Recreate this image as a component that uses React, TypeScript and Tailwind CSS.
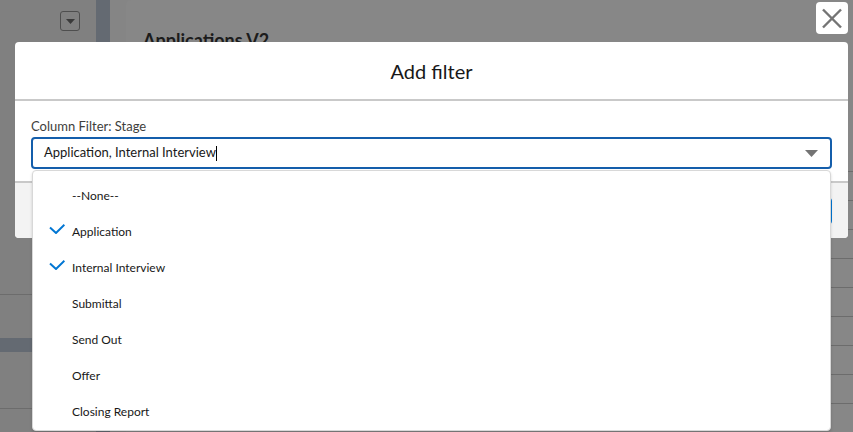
import React from "react";

const items = [
  { label: "--None--", checked: false },
  { label: "Application", checked: true },
  { label: "Internal Interview", checked: true },
  { label: "Submittal", checked: false },
  { label: "Send Out", checked: false },
  { label: "Offer", checked: false },
  { label: "Closing Report", checked: false },
];

function Check() {
  return (
    <svg width="16" height="10" viewBox="0 0 16 10" className="block">
      <polyline points="1,3.6 7,9 15.4,0.8" fill="none" stroke="#0176d3" strokeWidth="2" />
    </svg>
  );
}

export default function App() {
  return (
    <div className="relative w-[853px] h-[432px] overflow-hidden bg-[#858585] font-[Lato,sans-serif]">
      {/* Background page (dimmed) */}
      <div className="flex h-full">
        <aside className="w-[96px] bg-[#808080] flex flex-col">
          <div className="h-[294px] flex justify-end pr-[16px] pt-[11px]">
            <div className="w-[20px] h-[20px] rounded-[3px] border border-[#4e4e4e] flex items-center justify-center">
              <svg width="9" height="5" viewBox="0 0 9 5">
                <polygon points="0,0 9,0 4.5,5" fill="#3a3a3a" />
              </svg>
            </div>
          </div>
          <div className="h-[44px] border-t border-[#6c6c6c]" />
          <div className="h-[14px] bg-[#646a72]" />
          <div className="h-[56px]" />
          <div className="flex-1 border-t border-[#6c6c6c]" />
        </aside>
        <div className="w-[14px] bg-[#646a72]" />
        <div className="w-[16px]" />
        <main className="flex-1 bg-[#878787] rounded-tl-[5px] flex flex-col">
          <div className="h-[196px] pl-[17px] pt-[28px]">
            <h1 className="text-[18px] leading-[24px] font-bold text-[#1c1c1c]">Applications V2</h1>
          </div>
          {Array.from({ length: 9 }).map((_, i) => (
            <div key={i} className="h-[29px] shrink-0 border-t border-[#6c6c6c]" />
          ))}
        </main>
      </div>

      {/* Close button */}
      <button className="absolute left-[816px] top-[2px] w-[32px] h-[32px] rounded-[4px] bg-white flex items-center justify-center">
        <svg width="32" height="32" viewBox="0 0 32 32">
          <line x1="7" y1="7.5" x2="25" y2="25.5" stroke="#747474" strokeWidth="2.4" />
          <line x1="25" y1="7.5" x2="7" y2="25.5" stroke="#747474" strokeWidth="2.4" />
        </svg>
      </button>

      {/* Modal */}
      <div className="absolute left-[15px] top-[42px] w-[833px] rounded-[4px] bg-white flex flex-col">
        <div className="h-[59px] flex items-center justify-center border-b-2 border-[#c9c9c9] text-[20px] text-[#181818]">
          Add filter
        </div>
        <div className="pl-[16px] pr-[16px] pt-[16px] pb-[12px]">
          <div className="h-[20px] flex items-center text-[13px] text-[#3e3e3c]">Column Filter: Stage</div>
          <div className="relative">
            <div className="h-[32px] rounded-[4px] border-2 border-[#145eab] flex items-center pl-[11px] pr-[12px] text-[13px] text-[#181818]">
              <span>Application, Internal Interview</span>
              <span className="w-px h-[15px] bg-black" />
              <span className="flex-1" />
              <svg width="13" height="7" viewBox="0 0 13 7">
                <polygon points="0,0 13,0 6.5,7" fill="#747474" />
              </svg>
            </div>
            {/* Dropdown listbox */}
            <div className="absolute left-[1px] right-[1px] top-[33px] bg-white border border-[#d8d8d8] rounded-[4px] shadow-[0_2px_3px_rgba(0,0,0,0.16)] pt-[7px] z-10">
              {items.map((it) => (
                <div key={it.label} className="h-[36px] flex items-center pl-[16px] text-[12px] text-[#181818]">
                  <div className="w-[16px] h-[36px] mr-[7px] pt-[10px]">{it.checked && <Check />}</div>
                  <span>{it.label}</span>
                </div>
              ))}
            </div>
          </div>
        </div>
        <div className="h-[57px] border-t-2 border-[#c9c9c9] bg-[#f3f3f3] rounded-b-[4px] flex justify-end items-start pt-[14px] pr-[16px] gap-2">
          <button className="h-[28px] px-4 rounded-[4px] border border-[#c9c9c9] bg-white text-[13px] text-[#0176d3]">Cancel</button>
          <button className="h-[28px] px-4 rounded-[4px] border border-[#0176d3] bg-[#0176d3] text-[13px] text-white">Save</button>
        </div>
      </div>
    </div>
  );
}
